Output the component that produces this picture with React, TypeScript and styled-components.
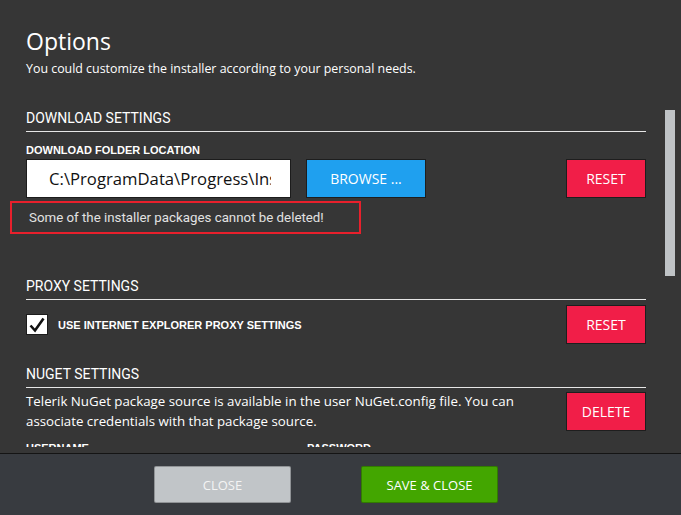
import styled, { createGlobalStyle } from "styled-components";

const GlobalStyle = createGlobalStyle`
  html, body {
    margin: 0;
    padding: 0;
    background: #363636;
  }
  * {
    box-sizing: border-box;
  }
`;

const Window = styled.div`
  width: 681px;
  height: 515px;
  display: flex;
  flex-direction: column;
  background: #363636;
  color: #ffffff;
  font-family: "Open Sans", "Noto Sans", sans-serif;
`;

const Body = styled.div`
  position: relative;
  padding-bottom: 6px;
`;

const ScrollArea = styled.div`
  height: 447px;
  overflow: hidden;
  padding: 26px 35px 0 26px;
`;

const ScrollThumb = styled.div`
  position: absolute;
  top: 110px;
  right: 6px;
  width: 10px;
  height: 166px;
  background: #bfc3c6;
`;

const Title = styled.h1`
  margin: 0;
  font-size: 23px;
  font-weight: 400;
  line-height: 30px;
`;

const Subtitle = styled.p`
  margin: 4px 0 0 0;
  font-size: 12.4px;
  line-height: 18px;
`;

const SectionHeader = styled.div<{ $top: number }>`
  margin-top: ${(p) => p.$top}px;
  padding-bottom: 4px;
  border-bottom: 1px solid #e6e6e6;
  font-family: Roboto, "Liberation Sans", sans-serif;
  font-size: 14px;
  line-height: 18px;
  text-transform: uppercase;
`;

const FieldLabel = styled.div`
  margin-top: 11px;
  font-family: "Liberation Sans", Arial, sans-serif;
  font-weight: 700;
  font-size: 11px;
  line-height: 14px;
`;

const Row = styled.div<{ $top: number }>`
  display: flex;
  align-items: center;
  margin-top: ${(p) => p.$top}px;
`;

const PathField = styled.div`
  flex: none;
  width: 265px;
  height: 39px;
  padding-left: 22px;
  border: 1px solid #1c1c1c;
  background: #ffffff;
`;

const PathText = styled.div`
  width: 222px;
  overflow: hidden;
  white-space: nowrap;
  line-height: 37px;
  color: #111111;
  font-family: "Open Sans", "Noto Sans", sans-serif;
  font-size: 16.7px;
`;

const Button = styled.button<{ $bg: string; $w: number }>`
  width: ${(p) => p.$w}px;
  height: 39px;
  border: 1px solid #1e1e1e;
  background: ${(p) => p.$bg};
  color: #ffffff;
  font-family: "Open Sans", "Noto Sans", sans-serif;
  font-size: 14px;
  text-transform: uppercase;
  cursor: pointer;
  padding: 0;
`;

const BrowseButton = styled(Button)`
  margin-left: 15px;
`;

const PushRight = styled.div`
  margin-left: auto;
`;

const ErrorBox = styled.div`
  margin: 3px 0 0 -16px;
  width: 351px;
  height: 33px;
  border: 2px solid #e8202c;
  padding-left: 17px;
  display: flex;
  align-items: center;
  font-family: Roboto, "Liberation Sans", sans-serif;
  font-size: 13.3px;
  color: #e2e2e2;
`;

const CheckBox = styled.span`
  flex: none;
  width: 22px;
  height: 21px;
  background: #ffffff;
  border: 1px solid #1c1c1c;
  display: inline-flex;
  align-items: center;
  justify-content: center;
`;

const CheckLabel = styled.span`
  margin-left: 10px;
  font-family: "Liberation Sans", Arial, sans-serif;
  font-weight: 700;
  font-size: 11px;
`;

const NugetText = styled.p`
  margin: 0;
  width: 500px;
  font-size: 13.3px;
  line-height: 20px;
`;

const CredRow = styled.div`
  display: grid;
  grid-template-columns: 281px 1fr;
  margin-top: 11px;
  font-family: "Liberation Sans", Arial, sans-serif;
  font-weight: 700;
  font-size: 11px;
`;

const Footer = styled.div`
  flex: 1;
  display: flex;
  align-items: center;
  justify-content: center;
  gap: 70px;
  padding-right: 29px;
  background: #383b40;
  border-top: 1px solid #141414;
`;

const FooterButton = styled.button<{ $bg: string; $color: string }>`
  width: 137px;
  height: 37px;
  border: 1px solid rgba(0, 0, 0, 0.25);
  border-radius: 2px;
  background: ${(p) => p.$bg};
  color: ${(p) => p.$color};
  font-family: "Open Sans", "Noto Sans", sans-serif;
  font-size: 13px;
  cursor: pointer;
`;

const Check = () => (
  <svg width="18" height="18" viewBox="0 0 18 18">
    <path d="M2.5 9.5 L7 14.5 L15.5 2.5" fill="none" stroke="#111" strokeWidth="2.6" />
  </svg>
);

export default function App() {
  return (
    <Window>
      <GlobalStyle />
      <Body>
        <ScrollArea>
          <Title>Options</Title>
          <Subtitle>You could customize the installer according to your personal needs.</Subtitle>

          <SectionHeader $top={31}>Download Settings</SectionHeader>
          <FieldLabel>DOWNLOAD FOLDER LOCATION</FieldLabel>
          <Row $top={2}>
            <PathField>
              <PathText>C:\ProgramData\Progress\Installer</PathText>
            </PathField>
            <BrowseButton $bg="#1fa0ef" $w={120}>
              Browse ...
            </BrowseButton>
            <PushRight>
              <Button $bg="#f11e48" $w={80}>
                Reset
              </Button>
            </PushRight>
          </Row>
          <ErrorBox>Some of the installer packages cannot be deleted!</ErrorBox>

          <SectionHeader $top={43}>Proxy Settings</SectionHeader>
          <Row $top={5}>
            <CheckBox>
              <Check />
            </CheckBox>
            <CheckLabel>USE INTERNET EXPLORER PROXY SETTINGS</CheckLabel>
            <PushRight>
              <Button $bg="#f11e48" $w={80}>
                Reset
              </Button>
            </PushRight>
          </Row>

          <SectionHeader $top={21}>NuGet Settings</SectionHeader>
          <Row $top={3}>
            <NugetText>
              Telerik NuGet package source is available in the user NuGet.config file. You can
              associate credentials with that package source.
            </NugetText>
            <PushRight>
              <Button $bg="#f11e48" $w={80}>
                Delete
              </Button>
            </PushRight>
          </Row>
          <CredRow>
            <span>USERNAME</span>
            <span>PASSWORD</span>
          </CredRow>
        </ScrollArea>
        <ScrollThumb />
      </Body>
      <Footer>
        <FooterButton $bg="#c1c5c8" $color="#f4f4f4">
          CLOSE
        </FooterButton>
        <FooterButton $bg="#43a600" $color="#ffffff">
          SAVE &amp; CLOSE
        </FooterButton>
      </Footer>
    </Window>
  );
}
